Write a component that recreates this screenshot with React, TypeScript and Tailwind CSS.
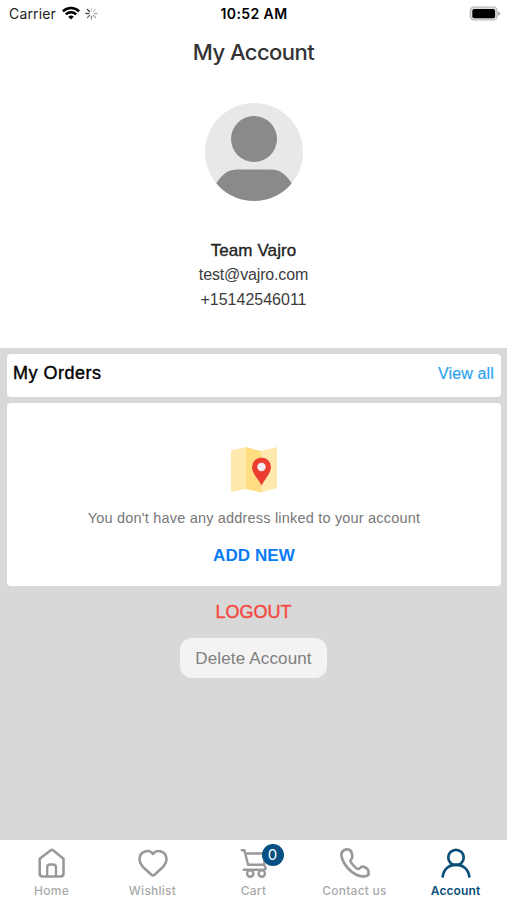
import type { ReactNode } from "react";

const SPOKES = [
  { angle: 0, opacity: 0.2 },
  { angle: 45, opacity: 0.25 },
  { angle: 90, opacity: 0.35 },
  { angle: 135, opacity: 0.4 },
  { angle: 180, opacity: 0.5 },
  { angle: 225, opacity: 0.65 },
  { angle: 270, opacity: 0.8 },
  { angle: 315, opacity: 0.9 },
];

function StatusBar() {
  return (
    <div className="flex h-[26px] items-center justify-between pl-[9px] pr-[7px] font-['Inter',sans-serif] text-black">
      <div className="flex w-[180px] items-center">
        <span className="text-[14px] tracking-[0.15px] text-[#222]">Carrier</span>
        <svg className="ml-[6px] h-[14px] w-[18px]" viewBox="0 0 18 14" fill="none" stroke="#000" strokeWidth="2.5">
          <path d="M0.9 5.4a11.6 11.6 0 0 1 16.2 0" />
          <path d="M3.8 8.4a7.5 7.5 0 0 1 10.4 0" />
          <path d="M9 13.6L6.2 10.8a4 4 0 0 1 5.6 0z" fill="#000" stroke="none" />
        </svg>
        <svg className="ml-[5px] h-[13px] w-[13px]" viewBox="-6.5 -6.5 13 13">
          {SPOKES.map((s) => (
            <path key={s.angle} d="M0-2.7V-5.6" stroke="#222" strokeWidth="1.3" strokeLinecap="round" opacity={s.opacity} transform={`rotate(${s.angle})`} />
          ))}
        </svg>
      </div>
      <span className="mr-px text-[14px] font-semibold tracking-[0.4px]">10:52 AM</span>
      <div className="flex w-[180px] justify-end">
        <svg className="h-[15px] w-[31px]" viewBox="0 0 31 15">
          <rect x="1.3" y="1" width="26.8" height="13" rx="3.6" fill="#ddd" stroke="#b5b5b5" strokeWidth="1.2" />
          <rect x="3.3" y="2.9" width="22.8" height="9.4" rx="2" fill="#000" />
          <path d="M29.1 5.4v4.4q1.9-.8 1.9-2.2t-1.9-2.2z" fill="#999" />
        </svg>
      </div>
    </div>
  );
}

function Avatar() {
  return (
    <svg className="h-[98px] w-[98px]" viewBox="0 0 98 98">
      <defs>
        <clipPath id="avatar">
          <circle cx="49" cy="49" r="49" />
        </clipPath>
      </defs>
      <g clipPath="url(#avatar)">
        <rect width="98" height="98" fill="#e8e8e8" />
        <circle cx="49" cy="36" r="23" fill="#8a8a8a" />
        <path d="M9 84C16 72 22 66.500 33 66.500H65C76 66.500 82 72 89 84V98H9z" fill="#8a8a8a" />
      </g>
    </svg>
  );
}

function MapIcon() {
  return (
    <svg className="mr-[2px] h-[46px] w-[47px]" viewBox="0 0 47 46">
      <path d="M1 3.5L16 0V42L1 45z" fill="#ffe9ae" />
      <path d="M16 0L31 4V45.5L16 42z" fill="#fedd83" />
      <path d="M31 4L47 0V41L31 45.5z" fill="#ffe9ae" />
      <path d="M31.5 38.5C28 32 22 26 22 20a9.5 9.5 0 0 1 19 0c0 6-6 12-9.500 18.500z" fill="#eb3e31" />
      <circle cx="31.5" cy="20" r="4.2" fill="#f5eff5" />
    </svg>
  );
}

function Tab({ label, active = false, children }: { label: string; active?: boolean; children: ReactNode }) {
  return (
    <div className={active ? "flex w-[101px] flex-col items-center text-[#0b4f7b]" : "flex w-[101px] flex-col items-center text-[#999]"}>
      <div className="relative h-8 w-8">{children}</div>
      <span className={active ? "mt-1 text-[12px] leading-4 font-semibold tracking-[0.1px]" : "mt-1 text-[12px] leading-4 font-medium tracking-[0.25px] text-[#aaa]"}>{label}</span>
    </div>
  );
}

const ICON = "h-8 w-8 fill-none stroke-current";

export default function App() {
  return (
    <main className="flex h-[900px] w-[507px] flex-col overflow-hidden bg-[#d8d8d8] font-['Liberation_Sans',sans-serif]">
      <header className="flex h-[348px] shrink-0 flex-col bg-white">
        <StatusBar />
        <h1 className="mt-[10px] text-center font-['Inter',sans-serif] text-[22px] leading-8 font-medium tracking-[-0.55px] text-[#333]">My Account</h1>
        <div className="mt-[35px] flex flex-col items-center text-[#3c3c3c]">
          <Avatar />
          <p className="mt-[38px] text-[17px] leading-6 tracking-[0.1px] text-[#222] [-webkit-text-stroke:0.35px_#222]">Team Vajro</p>
          <p className="text-[16px] leading-6 tracking-[-0.15px]">test@vajro.com</p>
          <p className="mt-px text-[16px] leading-6">+15142546011</p>
        </div>
      </header>
      <section className="mr-[6px] ml-[7px] mt-[6px] flex h-[43px] shrink-0 items-center justify-between rounded-[4px] bg-white pr-[7px] pb-1 pl-[6px]">
        <h2 className="text-[18px] tracking-[0.5px] text-black [-webkit-text-stroke:0.4px_#000]">My Orders</h2>
        <a className="text-[16px] tracking-[0.15px] text-[#2ca4ee] [-webkit-text-stroke:0.2px_#2ca4ee]">View all</a>
      </section>
      <section className="mr-[6px] ml-[7px] mt-[6px] flex h-[183px] shrink-0 flex-col items-center rounded-[4px] bg-white pt-[44px]">
        <MapIcon />
        <p className="mt-[15px] text-[14.5px] leading-5 tracking-[0.19px] text-[#777]">You don't have any address linked to your account</p>
        <button className="mt-4 text-[17px] leading-6 font-bold tracking-[0.1px] text-[#087bf5]">ADD NEW</button>
      </section>
      <div className="flex flex-1 flex-col items-center">
        <button className="mt-[14px] text-[18px] leading-6 text-[#f5483e] [-webkit-text-stroke:0.4px_#f5483e]">LOGOUT</button>
        <button className="mt-[14px] h-10 w-[147px] rounded-[12px] bg-[#f3f3f3] pt-[2px] text-[17px] tracking-[0.15px] text-[#808080]">Delete Account</button>
      </div>
      <nav className="flex h-[60px] shrink-0 justify-center bg-white pt-[7px] font-['Inter',sans-serif]">
        <Tab label="Home">
          <svg className={ICON} viewBox="0 0 32 32" strokeWidth="2.6" strokeLinejoin="round">
            <path d="M14.5 3.5L3.7 11.8V26.5Q3.7 29.5 6.7 29.5H24.5Q27.5 29.5 27.5 26.5V11.8L17 3.3Q15.7 2.3 14.5 3.5" />
            <path d="M11.2 29V20.5Q11.2 17.5 14 17.5H17.2Q20 17.5 20 20.5V29" strokeWidth="2.3" />
          </svg>
        </Tab>
        <Tab label="Wishlist">
          <svg className={ICON} viewBox="0 0 32 32" strokeWidth="2.6" strokeLinejoin="round">
            <path d="M16 7C12 1.5 2.500 4 2.500 12.500C2.500 18 8 22 14.500 27.700Q16 29 17.500 27.700C24 22 29.500 18 29.500 12.500C29.500 4 20 1.500 16 7z" />
          </svg>
        </Tab>
        <Tab label="Cart">
          <svg className={ICON} viewBox="0 0 32 32" strokeWidth="2.4" strokeLinecap="round" strokeLinejoin="round">
            <path d="M3.8 3.2H6.500L10 17.700H26L28 6.500H7.300" />
            <path d="M26 17.7Q29.500 22.700 25.500 22.700H5.800" />
            <circle cx="12.2" cy="26.6" r="3.2" />
            <circle cx="23.8" cy="26.6" r="3.2" />
          </svg>
          <span className="absolute -top-[3px] left-6 flex h-[22px] w-[22px] items-center justify-center rounded-full bg-[#075084] text-[15px] text-white">0</span>
        </Tab>
        <Tab label="Contact us">
          <svg className={ICON} viewBox="0 0 32 32" strokeWidth="2.7" strokeLinejoin="round">
            <path d="M4.5 3.5Q2 5 2.500 9C4 18 14 28.500 23 29.300Q27 29.800 29.500 28V24Q29 22 26.500 20.500Q23 18.500 21 21Q19.500 23 17 21Q13 17.500 11.500 14.500Q11 13 12.500 12Q14 10 13 7Q12 3 10 2.700Q7 2 4.500 3.500z" />
          </svg>
        </Tab>
        <Tab label="Account" active>
          <svg className={ICON} viewBox="0 0 32 32" strokeWidth="2.7" strokeLinecap="round">
            <circle cx="16" cy="10.5" r="7.7" />
            <path d="M2.7 29.5C5 13.600 27 13.600 29.300 29.500" />
          </svg>
        </Tab>
      </nav>
    </main>
  );
}
